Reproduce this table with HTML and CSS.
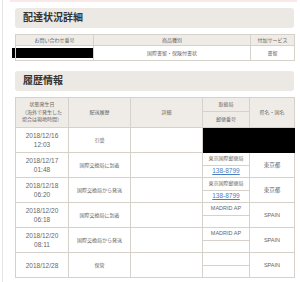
FILE: index.html
```html
<!DOCTYPE html>
<html lang="ja">
<head>
<meta charset="utf-8">
<link rel="stylesheet" href="styles.css">
</head>
<body>
<div class="page">
  <div class="pink-strip"></div>
  <h2 class="heading">配達状況詳細</h2>
  <table class="tbl tbl-detail">
    <colgroup><col class="d1"><col class="d2"><col class="d3"></colgroup>
    <tr class="hrow"><th>お問い合わせ番号</th><th>商品種別</th><th>付加サービス</th></tr>
    <tr class="drow"><td class="redact-cell"><div class="redact"></div></td><td>国際書留・保険付書状</td><td>書留</td></tr>
  </table>

  <h2 class="heading heading-2">履歴情報</h2>
  <table class="tbl tbl-history">
    <colgroup><col class="h1"><col class="h2"><col class="h3"><col class="h4"><col class="h5"></colgroup>
    <tr class="sub-a"><th rowspan="2" class="multi">状態発生日<br>（海外で発生した<br>場合は現地時間）</th><th rowspan="2">配送履歴</th><th rowspan="2">詳細</th><th>取扱局</th><th rowspan="2">県名・国名</th></tr>
    <tr class="sub-b"><th>郵便番号</th></tr>

    <tr class="r-a"><td rowspan="2" class="date">2018/12/16<br>12:03</td><td rowspan="2">引受</td><td rowspan="2"></td><td rowspan="2" class="black"></td><td rowspan="2" class="black"></td></tr>
    <tr class="r-b"></tr>

    <tr class="r-a"><td rowspan="2" class="date">2018/12/17<br>01:48</td><td rowspan="2">国際交換局に到着</td><td rowspan="2"></td><td class="office">東京国際郵便局</td><td rowspan="2" class="pref">東京都</td></tr>
    <tr class="r-b"><td class="zip"><a href="#">138-8799</a></td></tr>

    <tr class="r-a"><td rowspan="2" class="date">2018/12/18<br>06:20</td><td rowspan="2">国際交換局から発送</td><td rowspan="2"></td><td class="office">東京国際郵便局</td><td rowspan="2" class="pref">東京都</td></tr>
    <tr class="r-b"><td class="zip"><a href="#">138-8799</a></td></tr>

    <tr class="r-a"><td rowspan="2" class="date">2018/12/20<br>06:18</td><td rowspan="2">国際交換局に到着</td><td rowspan="2"></td><td class="office latin">MADRID AP</td><td rowspan="2" class="pref latin">SPAIN</td></tr>
    <tr class="r-b"><td class="zip"></td></tr>

    <tr class="r-a"><td rowspan="2" class="date">2018/12/20<br>08:11</td><td rowspan="2">国際交換局から発送</td><td rowspan="2"></td><td class="office latin">MADRID AP</td><td rowspan="2" class="pref latin">SPAIN</td></tr>
    <tr class="r-b"><td class="zip"></td></tr>

    <tr class="r-a"><td rowspan="2" class="date">2018/12/28</td><td rowspan="2">保管</td><td rowspan="2"></td><td class="office"></td><td rowspan="2" class="pref latin">SPAIN</td></tr>
    <tr class="r-b"><td class="zip"></td></tr>
  </table>
</div>
</body>
</html>
```

FILE: styles.css
```css
* { box-sizing: border-box; }
html, body { margin: 0; padding: 0; background: #fff; }
body {
  font-family: "Liberation Sans", "Noto Sans CJK JP", sans-serif;
  color: #666;
  width: 300px;
  height: 282px;
  overflow: hidden;
}
.page {
  margin-left: 2px;
  border-left: 1px solid #e4e4e4;
  padding-left: 12px;
  width: 298px;
  min-height: 282px;
}
.pink-strip {
  height: 2px;
  background: #fbe9e9;
  margin: 0 0 0 -5px;
  width: 287px;
}
.heading {
  margin: 6px 0 0 0;
  width: 279px;
  height: 20px;
  line-height: 20px;
  padding-left: 8px;
  background: #ece8e3;
  border-radius: 3px;
  font-size: 10px;
  font-weight: bold;
  color: #333;
}
.heading-2 { margin-top: 10px; }

.tbl {
  border-collapse: collapse;
  table-layout: fixed;
  width: 279px;
  margin-top: 6px;
}
.tbl th, .tbl td {
  border: 1px solid #d6d1cb;
  padding: 0;
  text-align: center;
  vertical-align: middle;
  font-weight: normal;
  overflow: visible;
}
.tbl th {
  background: #efece8;
  font-size: 5px;
  line-height: 7px;
  color: #666;
}
.tbl td {
  font-size: 5px;
  color: #666;
  line-height: 7px;
}

.d1 { width: 78px; }
.d2 { width: 157px; }
.d3 { width: 44px; }
.tbl-detail .hrow th { height: 11px; }
.tbl-detail .drow td { height: 15px; }
.redact {
  width: 82px;
  height: 10px;
  margin-left: -4px;
  background: #000;
}

.h1 { width: 53px; }
.h2 { width: 62px; }
.h3 { width: 72px; }
.h4 { width: 47px; }
.h5 { width: 45px; }
.tbl-history .sub-a th { height: 14px; }
.tbl-history .sub-b th { height: 16px; }
.tbl-history .r-a { height: 12.5px; }
.tbl-history .r-b { height: 12.5px; }
.tbl-history .r-a > td.office { height: 12.5px; }
.tbl-history .r-b > td.zip { height: 12.5px; }
.tbl-history .multi { line-height: 7.5px; }
.tbl-history td.date {
  font-size: 6.5px;
  line-height: 9px;
}
.tbl-history td.black {
  background: #000;
  border-color: #000;
}
.tbl-history td.office {
  font-size: 5px;
  white-space: nowrap;
}
.tbl-history td.latin { font-size: 5.5px; }
.tbl-history td.pref { font-size: 5.5px; }
.tbl-history td.zip a {
  color: #4a7cc4;
  font-size: 6.5px;
  line-height: 8px;
  text-decoration: underline;
}
```
